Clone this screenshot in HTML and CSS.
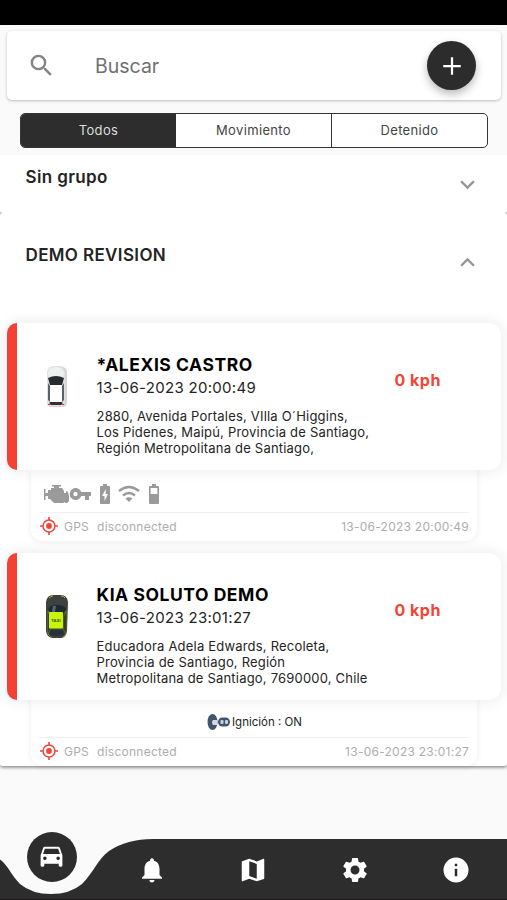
FILE: index.html
```html
<!DOCTYPE html>
<html lang="es">
<head>
<meta charset="utf-8">
<title>Vehículos</title>
<link rel="stylesheet" href="styles.css">
</head>
<body>
<div class="status-bar"></div>
<main class="content">
  <div class="search">
    <svg class="search-icon" viewBox="0 0 24 24"><path d="M15.5 14h-.79l-.28-.27A6.47 6.47 0 0 0 16 9.500 6.500 6.500 0 1 0 9.500 16c1.610 0 3.090-.59 4.230-1.570l.27.28v.79l5 4.990L20.490 19l-4.990-5zm-6 0a4.500 4.500 0 1 1 0-9 4.500 4.500 0 0 1 0 9z"/></svg>
    <span class="search-hint">Buscar</span>
    <button class="add" aria-label="Agregar"><svg viewBox="0 0 24 24"><path d="M19 12.900h-6.100V19h-1.800v-6.100H5v-1.800h6.100V5h1.800v6.100H19z"/></svg></button>
  </div>
  <div class="tabs">
    <div class="tab active">Todos</div>
    <div class="tab">Movimiento</div>
    <div class="tab">Detenido</div>
  </div>
  <div class="groups">
    <section class="group">
      <header class="group-head first"><h2>Sin grupo</h2><svg class="chevron" viewBox="0 0 24 24"><path d="M7.400 8.600 12 13.200l4.600-4.600L18 10l-6 6-6-6z"/></svg></header>
    </section>
    <section class="group open">
      <header class="group-head second"><h2>DEMO REVISION</h2><svg class="chevron" viewBox="0 0 24 24"><path d="m12 8-6 6 1.400 1.400 4.600-4.600 4.600 4.600L18 14z"/></svg></header>

      <article class="device">
        <div class="card">
          <div class="stripe"></div>
          <svg class="car" viewBox="0 0 24 46">
            <path d="M3 7Q4 2 12 2q9 0 10 5v30q0 6-4 6H6q-4 0-4-5z" fill="#d3d6d7"/>
            <path d="M2 8Q3 2 11 2q8 0 9 6v30q-1 4-4 4H5q-3 0-3-4z" fill="#dfe1e2"/>
            <path d="M3 9Q4 3 11 3t8 6l-1 5H4z" fill="#eff0f0"/>
            <path d="M3 14q8-4 16 0l-2 7H5z" fill="#292c2f"/>
            <path d="M3 19l2 3v16l-2-2zM19 19l-2 3v16l2-2z" fill="#596268"/>
            <rect x="5" y="21" width="12" height="17" rx="1" fill="#fff"/>
            <path d="M5 38h12l1 3H4z" fill="#353035"/>
            <path d="M3 40h3v1H3zM16 40h3v1h-3z" fill="#d83d3d"/>
          </svg>
          <div class="info">
            <h3>*ALEXIS CASTRO</h3>
            <time>13-06-2023 20:00:49</time>
            <p>2880, Avenida Portales, VIlla O´Higgins,<br>Los Pidenes, Maipú, Provincia de Santiago,<br>Región Metropolitana de Santiago,</p>
          </div>
          <strong class="speed">0 kph</strong>
        </div>
        <div class="details">
          <div class="sensors">
            <svg class="engine" viewBox="0 0 26 20"><path d="M1 5h1.500v4H5V6h3V4h3V2.500H9V1h9v1.500h-2V4h3l2 3v2h2V7l2 1 1 4v5l-2 2h-2v-1l-2 1H11l-4-4H5v-3H2.500v4H1z"/></svg>
            <svg class="key" viewBox="0 0 22 14"><path d="M12.300 5A6 6 0 1 0 12.300 9H16v4h4V9h2V5zM6.500 9.200a2.200 2.200 0 1 1 0-4.400 2.200 2.200 0 0 1 0 4.400z"/></svg>
            <svg class="charge" viewBox="0 0 10 20"><path fill-rule="evenodd" d="M3 0h4v2h2q1 0 1 1v16q0 1-1 1H1q-1 0-1-1V3q0-1 1-1h2zM5.700 5 2 12h2.500v5L8 10H5.700z"/></svg>
            <svg class="wifi" viewBox="0 0 24 20"><path d="M2 7q10-8 20 0M6 11.500q6-5 12 0" fill="none" stroke="#9a9a9a" stroke-width="2.400"/><path d="m8.500 14.500q3.500-2.500 7 0L12 18z"/></svg>
            <svg class="battery" viewBox="0 0 10 20"><path fill-rule="evenodd" d="M3 0h4v2h2q1 0 1 1v16q0 1-1 1H1q-1 0-1-1V3q0-1 1-1h2zM1.600 4v6h6.800V4z"/></svg>
          </div>
          <footer>
            <svg class="gps" viewBox="0 0 18 18"><circle cx="9" cy="9" r="6" fill="none" stroke="#f34438" stroke-width="1.500"/><circle cx="9" cy="9" r="2.900"/><path d="M8.200 0h1.600v3H8.200zM8.200 15h1.600v3H8.200zM0 8.200h3v1.600H0zM15 8.200h3v1.600h-3z"/></svg>
            <span class="gps-text">GPS</span><span class="state">disconnected</span><time>13-06-2023 20:00:49</time>
          </footer>
        </div>
      </article>

      <article class="device">
        <div class="card">
          <div class="stripe"></div>
          <svg class="car" viewBox="0 0 24 46">
            <path d="M1 8Q2 1 8 1h8q6 0 7 7l-1 29q-1 7-6 7H8q-6 0-7-7z" fill="#3e4142"/>
            <path d="M4 4Q6 2 8 2M16 2q3 0 4 2" fill="none" stroke="#a7bb20"/>
            <path d="M3 15q2-4 9-4t9 4l-3 5H6z" fill="#202931"/>
            <path d="M8 12h3l-1 6H7z" fill="#526879"/>
            <path d="M3 17l2 5v14l-2 4zM21 17l-2 5v14l2 4z" fill="#171d1b" stroke="#819426" stroke-width=".6"/>
            <rect x="4" y="18" width="14" height="16.500" rx="1" fill="#c9f50b"/>
            <text x="11" y="28" text-anchor="middle" class="taxi">TAXI</text>
            <path d="M5 36h13l1 5q-7 2-15 0z" fill="#27333a"/>
            <path d="M3 40l3 3M21 40l-3 3" stroke="#99643b"/>
          </svg>
          <div class="info">
            <h3>KIA SOLUTO DEMO</h3>
            <time>13-06-2023 23:01:27</time>
            <p>Educadora Adela Edwards, Recoleta,<br>Provincia de Santiago, Región<br>Metropolitana de Santiago, 7690000, Chile</p>
          </div>
          <strong class="speed">0 kph</strong>
        </div>
        <div class="details last">
          <div class="ignition">
            <svg viewBox="0 0 24 18"><ellipse cx="5.500" cy="9" rx="5" ry="8" fill="#40566f"/><path d="M6 7h4v5H6q-2-2.500 0-5z" fill="#d9d5e7"/><rect x="11" y="4.500" width="12" height="9" rx="4.500" fill="#40566f"/><rect x="13.500" y="7" width="3" height="4" rx="1" fill="#c6d1de"/><rect x="18" y="7" width="3" height="4" rx="1" fill="#c6d1de"/></svg><span>Ignición : ON</span>
          </div>
          <footer>
            <svg class="gps" viewBox="0 0 18 18"><circle cx="9" cy="9" r="6" fill="none" stroke="#f34438" stroke-width="1.500"/><circle cx="9" cy="9" r="2.900"/><path d="M8.200 0h1.600v3H8.200zM8.200 15h1.600v3H8.200zM0 8.200h3v1.600H0zM15 8.200h3v1.600h-3z"/></svg>
            <span class="gps-text">GPS</span><span class="state">disconnected</span><time>13-06-2023 23:01:27</time>
          </footer>
        </div>
      </article>
    </section>
  </div>
</main>
<nav class="nav">
  <svg class="wave" viewBox="0 0 507 61"><path d="M0 20.500C7 25 11 36 20 45Q32 55 51 55T82 45C94 33 97 21 109 12Q127 0 153 0H507V61H0z"/></svg>
  <div class="nav-items">
    <span class="nav-item selected"><span class="bubble"><svg viewBox="0 0 24 24"><path fill-rule="evenodd" d="M18.920 5.010C18.720 4.420 18.160 4 17.500 4h-11c-.66 0-1.210.42-1.420 1.010L3 11v8.500c0 .55.45 1 1 1h1c.55 0 1-.45 1-1V18h12v1.500c0 .55.45 1 1 1h1c.55 0 1-.45 1-1V11zM6.500 15a1.500 1.500 0 1 1 0-3 1.500 1.500 0 0 1 0 3zm11 0a1.500 1.500 0 1 1 0-3 1.500 1.500 0 0 1 0 3zM5 10l1.500-4.500h11L19 10z"/></svg></span></span>
    <span class="nav-item"><svg viewBox="0 0 24 24"><path d="M12 22c1.100 0 2-.9 2-2h-4a2 2 0 0 0 2 2zm6-6v-5c0-3.070-1.640-5.640-4.500-6.320V4a1.500 1.500 0 0 0-3 0v.68C7.630 5.360 6 7.920 6 11v5l-2 2v1h16v-1z"/></svg></span>
    <span class="nav-item"><svg viewBox="0 0 24 24"><path d="m20.500 3-.16.03L15 5.100 9 3 3.360 4.900A.5.500 0 0 0 3 5.380V20.500c0 .28.22.5.5.5l.16-.03L9 18.900l6 2.100 5.640-1.900a.5.500 0 0 0 .36-.48V3.500a.5.500 0 0 0-.5-.5zM15 19l-6-2.110V5l6 2.110z"/></svg></span>
    <span class="nav-item"><svg viewBox="0 0 24 24"><path d="M19.140 12.940a7.070 7.070 0 0 0 0-1.880l2.030-1.580a.5.500 0 0 0 .12-.61l-1.920-3.320a.49.490 0 0 0-.59-.22l-2.390.96a7.030 7.030 0 0 0-1.620-.94l-.36-2.540a.48.480 0 0 0-.48-.41h-3.840a.48.480 0 0 0-.47.41l-.36 2.540a7.030 7.030 0 0 0-1.620.94l-2.390-.96a.48.480 0 0 0-.59.22L2.740 8.870a.47.470 0 0 0 .12.610l2.030 1.580a7.070 7.070 0 0 0 0 1.880l-2.030 1.580a.5.500 0 0 0-.12.610l1.920 3.320c.12.220.37.290.59.220l2.390-.96c.5.380 1.030.7 1.620.94l.36 2.540c.5.240.24.410.48.410h3.840c.24 0 .44-.17.470-.41l.36-2.540a7.030 7.030 0 0 0 1.620-.94l2.390.96c.22.080.47 0 .59-.22l1.920-3.320a.47.470 0 0 0-.12-.61zM12 15.600a3.600 3.600 0 1 1 0-7.200 3.600 3.600 0 0 1 0 7.200z"/></svg></span>
    <span class="nav-item"><svg viewBox="0 0 24 24"><path d="M12 2a10 10 0 1 0 0 20 10 10 0 0 0 0-20zm1 15h-2v-6h2zm0-8h-2V7h2z"/></svg></span>
  </div>
</nav>
</body>
</html>
```
FILE: styles.css
```css
* { box-sizing: border-box; }
body {
  margin: 0;
  height: 900px;
  display: flex;
  flex-direction: column;
  overflow: hidden;
  background: #fafafa;
  color: #242424;
  font-family: Inter, "Liberation Sans", sans-serif;
}
svg { display: block; flex: none; }
h2, h3, p { margin: 0; }
.status-bar { height: 25px; background: #000; flex: none; }
.content { flex: 1; padding-top: 6px; }
.search {
  height: 69px;
  margin: 0 6px 0 7px;
  padding: 0 25px 0 20px;
  display: flex;
  align-items: center;
  background: #fff;
  border-radius: 5px;
  box-shadow: 0 1px 3px rgba(0, 0, 0, .25);
}
.search-icon { width: 29px; height: 29px; fill: #858585; }
.search-hint { margin-left: 39px; flex: 1; font-size: 19.500px; color: #707070; }
.add {
  width: 49px;
  height: 49px;
  padding: 0;
  border: 0;
  border-radius: 50%;
  background: #2c2c2c;
  display: grid;
  place-items: center;
  box-shadow: 0 4px 8px rgba(0, 0, 0, .28);
}
.add svg { width: 30px; height: 30px; fill: #fff; }
.tabs {
  height: 35px;
  margin: 13px 19px 7px 20px;
  display: grid;
  grid-template-columns: 155px 156px 1fr;
  border: 1px solid #353535;
  border-radius: 5px;
  overflow: hidden;
  background: #fff;
}
.tab { display: grid; place-items: center; padding-bottom: 1px; font-size: 13px; letter-spacing: .35px; color: #444; }
.tab + .tab { border-right: 1px solid #353535; }
.tab:last-child { border-right: 0; }
.tab.active { background: #2d2d2d; color: #ddd; }
.groups { height: 611px; background: #c4c4c4; box-shadow: 0 2px 3px rgba(0, 0, 0, .38); border-radius: 0 0 3px 3px; }
.group { background: #fff; border-radius: 0 0 3px 3px; }
.group.open { height: 553px; border-radius: 3px; }
.group-head { display: flex; justify-content: space-between; padding: 0 25px 0 25.500px; }
.group-head.first { height: 58px; padding-top: 12px; }
.group-head.second { height: 110px; padding-top: 32px; }
.group-head h2 { font-size: 17px; line-height: 21px; font-weight: 600; letter-spacing: .37px; }
.chevron { width: 29px; height: 29px; margin-top: 3px; fill: #949494; }
.device { height: 230px; }
.card {
  position: relative;
  height: 147px;
  margin: 0 6px 0 7px;
  display: flex;
  border-radius: 12px;
  background: #fff;
  box-shadow: 0 0 12px 4px rgba(0, 0, 0, .055);
}
.stripe { width: 10px; background: #f34235; border-radius: 10px 0 0 10px; }
.car { width: 24px; height: 46px; margin: 41px 0 0 28px; }
.taxi { font: 700 4px Inter, sans-serif; fill: #3b4b0a; }
.info { margin: 31px 0 0 27.500px; width: 290px; }
.info h3 { font-size: 17.500px; line-height: 22px; font-weight: 700; letter-spacing: .55px; color: #000; white-space: nowrap; }
.info time { display: block; font-size: 15px; line-height: 24px; letter-spacing: .3px; }
.info p { margin-top: 8px; font-size: 13px; line-height: 16px; letter-spacing: .2px; white-space: nowrap; }
.speed { margin-top: 46px; margin-left: 8px; font-size: 16px; line-height: 22px; letter-spacing: .5px; color: #f34438; }
.details {
  height: 71px;
  margin: 0 30px 0 31px;
  padding: 0 8px 0 9px;
  border-radius: 0 0 12px 12px;
  box-shadow: 0 1px 5px 2px rgba(0, 0, 0, .045);
}
.details.last { height: 66px; }
.sensors { height: 43px; display: flex; align-items: center; padding: 6px 0 0 3px; border-bottom: 1px solid #f2f2f2; fill: #9a9a9a; }
.engine { width: 26px; height: 20px; }
.key { width: 22px; height: 14px; }
.charge { width: 10px; height: 20px; margin-left: 9px; }
.wifi { width: 24px; height: 20px; margin-left: 7px; }
.battery { width: 10px; height: 20px; margin-left: 8px; }
.details footer { height: 26px; display: flex; align-items: center; color: #adadad; font-size: 12px; letter-spacing: .25px; }
.gps { width: 18px; height: 18px; fill: #f34438; }
.gps-text { margin-left: 6px; }
.state { margin-left: 8px; }
footer time { margin-left: auto; }
.ignition { height: 38px; padding-top: 6px; display: flex; align-items: center; justify-content: center; border-bottom: 1px solid #f2f2f2; font-size: 11.500px; }
.ignition svg { width: 24px; height: 18px; margin-right: 1px; }
.nav { position: relative; height: 61px; flex: none; }
.wave { width: 507px; height: 61px; fill: #2d2d2d; }
.nav-items { position: absolute; inset: 0; padding-top: 1px; display: grid; grid-template-columns: repeat(5, 1fr); border-bottom: 1px solid #211a1d; }
.nav-item { display: grid; place-items: center; }
.nav-item svg { width: 30px; height: 30px; fill: #fff; }
.bubble { width: 50px; height: 50px; border-radius: 50%; background: #2d2d2d; display: grid; place-items: center; transform: translate(1px, -13px); }
.bubble svg { width: 29px; height: 29px; }
```
